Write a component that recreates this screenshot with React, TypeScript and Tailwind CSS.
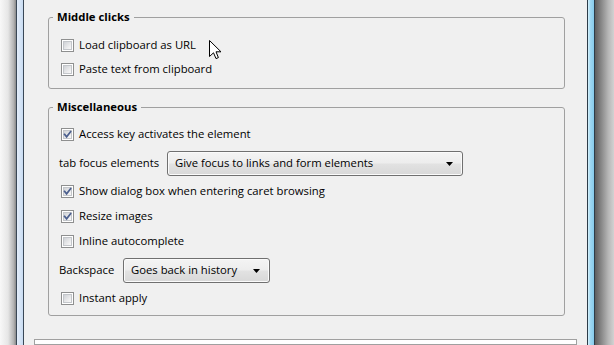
import React from "react";

function Box({ checked }: { checked?: boolean }) {
  return (
    <span className="relative block w-[13px] h-[13px] border border-[#8e8f8f] bg-white shrink-0">
      <span className="absolute inset-[1px] border border-[#c3c6ca] bg-[linear-gradient(135deg,#cfd2d6,#eeeeef_70%,#f8f8f8)]" />
      {checked && (
        <svg className="absolute left-[1px] top-[1px]" width="9" height="9" viewBox="0 0 9 9">
          <path d="M1.6 4.4 L3.6 6.8 L7.6 1.6" stroke="#4b5f8e" strokeWidth="1.7" fill="none" strokeLinecap="square" />
        </svg>
      )}
    </span>
  );
}

function Check({ label, checked, h }: { label: string; checked?: boolean; h: string }) {
  return (
    <div className={`flex items-center ${h} pl-[2px]`}>
      <Box checked={checked} />
      <span className="ml-[5px]">{label}</span>
    </div>
  );
}

function Select({ value, w }: { value: string; w: string }) {
  return (
    <div
      className={`relative flex items-center h-[25px] ${w} border border-[#707070] rounded-[3px] bg-[linear-gradient(#f4f4f4,#ededed_48%,#e2e2e2_52%,#d8d8d8)] pl-[7px] shadow-[inset_0_0_0_1px_#fbfbfb]`}
    >
      <span>{value}</span>
      <svg className="absolute right-[9px] top-[10px]" width="7" height="4" viewBox="0 0 7 4">
        <path d="M0 0 H7 L3.5 4 Z" fill="#000" />
      </svg>
    </div>
  );
}

function Group({ title, children, className }: { title: string; children: React.ReactNode; className: string }) {
  return (
    <div className={`relative border border-[#a0a0a0] rounded-[3px] ml-[24px] w-[517px] pl-[10px] ${className}`}>
      <div className="absolute -top-[9px] left-[4px] px-[4px] bg-[#f0f0f0] font-bold leading-[16px]">{title}</div>
      {children}
    </div>
  );
}

export default function App() {
  return (
    <div
      className="w-[614px] h-[345px] flex overflow-hidden text-[11.3px] text-black"
      style={{ fontFamily: '"Segoe UI", "Open Sans", sans-serif' }}
    >
      <div className="w-[16px] h-full bg-[linear-gradient(to_right,#f8f8f8,#e6e6e6_50%,#b4b4b4_85%,#8a8a8a)]" />
      <div className="w-[8px] h-full border-x border-[#3a4856] bg-[linear-gradient(to_right,#e4eefa,#c9dcf2)]" />
      <div className="relative w-[563px] h-full bg-[#f0f0f0] flex flex-col">
        <Group title="Middle clicks" className="mt-[17px] pt-[15px] pb-[7px]">
          <Check label="Load clipboard as URL" h="h-[24px]" />
          <Check label="Paste text from clipboard" h="h-[24px]" />
        </Group>
        <Group title="Miscellaneous" className="mt-[18px] pt-[14px] pb-[4px]">
          <Check label="Access key activates the element" checked h="h-[25px]" />
          <div className="flex items-center h-[32px]">
            <span className="w-[108px]">tab focus elements</span>
            <Select value="Give focus to links and form elements" w="w-[296px]" />
          </div>
          <Check label="Show dialog box when entering caret browsing" checked h="h-[25px]" />
          <Check label="Resize images" checked h="h-[25px]" />
          <Check label="Inline autocomplete" h="h-[25px]" />
          <div className="flex items-center h-[32px]">
            <span className="w-[64px]">Backspace</span>
            <Select value="Goes back in history" w="w-[147px]" />
          </div>
          <Check label="Instant apply" h="h-[25px]" />
        </Group>
        <div className="mt-[23px] ml-[10px] w-[543px] h-[20px] border border-[#a0a0a0] bg-white" />
        <svg className="absolute left-[185px] top-[40px]" width="13" height="20" viewBox="0 0 13 20">
          <path
            d="M0.5 0.5 L0.5 16.5 L4.5 12.8 L7 18.6 L9.4 17.6 L7 11.8 L12 11.8 Z"
            fill="#fff"
            stroke="#000"
            strokeWidth="1"
            strokeLinejoin="round"
          />
        </svg>
      </div>
      <div className="w-[8px] h-full border-x border-[#2e3c48] bg-[linear-gradient(to_right,#d8f2fc,#9fd8f2_40%,#86cbeb)]" />
      <div className="w-[19px] h-full bg-[linear-gradient(to_right,#5e5e5e,#8a8a8a_35%,#b6b6b6_70%,#d2d2d2)]" />
    </div>
  );
}
